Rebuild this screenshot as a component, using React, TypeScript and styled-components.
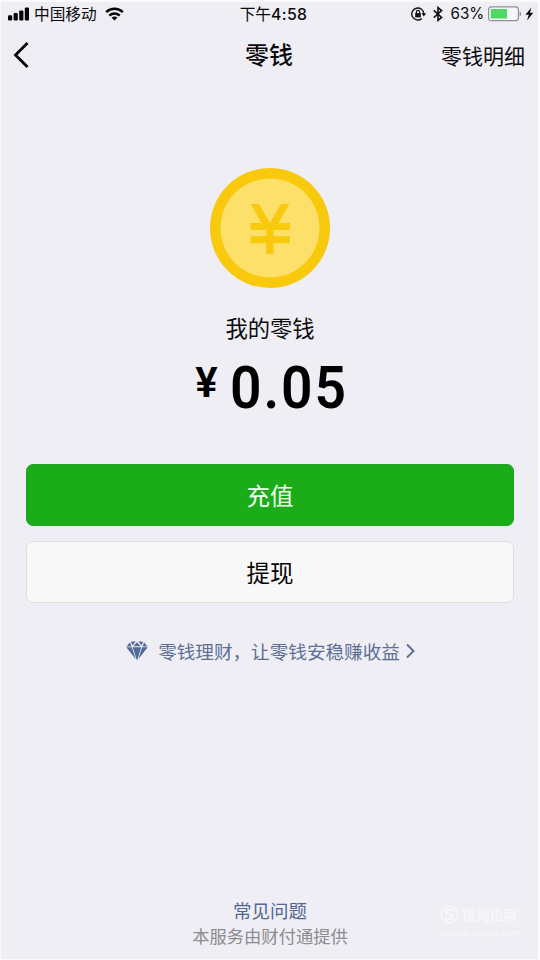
import React from "react";
import styled, { createGlobalStyle } from "styled-components";

const GlobalStyle = createGlobalStyle`
  * { box-sizing: border-box; }
  body { margin: 0; background: #fff; }
`;

const Screen = styled.div`
  position: relative;
  display: flex;
  flex-direction: column;
  width: 540px;
  height: 960px;
  overflow: hidden;
  background: #efeef4;
  border: solid #fafafc;
  border-width: 2px 2px 1px 1px;
  color: #0b0b0d;
  font-family: "Noto Sans CJK SC", sans-serif;
`;

const StatusBar = styled.header`
  display: grid;
  grid-template-columns: 1fr auto 1fr;
  align-items: center;
  height: 23px;
  padding: 0 4px 0 7px;
  font-size: 15.7px;
  line-height: 20px;
`;

const StatusGroup = styled.div<{ $end?: boolean }>`
  display: flex;
  align-items: center;
  justify-content: ${(p) => (p.$end ? "flex-end" : "flex-start")};
  svg { display: block; flex: none; }
`;

const Carrier = styled.span`
  margin: 0 8px 0 4px;
`;

const Clock = styled.span`
  padding: 1px 0 0 5px;
  white-space: nowrap;
`;

const ClockDigits = styled.span`
  font-family: Inter, sans-serif;
  font-size: 15.8px;
  font-weight: 500;
  letter-spacing: 0.35px;
`;

const Percent = styled.span`
  margin: 0 4px 0 8px;
  padding-top: 1px;
  font-family: Inter, sans-serif;
  font-size: 15.2px;
  letter-spacing: -0.1px;
`;

const RotationSlot = styled.span`
  margin-right: 6px;
`;

const BatterySlot = styled.span`
  margin-right: 3px;
`;

const NavBar = styled.nav`
  display: grid;
  grid-template-columns: 1fr auto 1fr;
  align-items: center;
  height: 60px;
  padding: 0 13px 0 12px;
  svg { display: block; }
`;

const Title = styled.h1`
  margin: 0 0 2px;
  font-size: 24px;
  font-weight: 500;
  line-height: 34px;
`;

const NavLink = styled.a`
  justify-self: end;
  font-size: 21px;
  line-height: 32px;
`;

const Main = styled.main`
  display: flex;
  flex-direction: column;
  align-items: center;
  padding: 83px 24px 0;
`;

const Label = styled.p`
  margin: 23px 0 0;
  padding-left: 1px;
  font-size: 22.3px;
  line-height: 32px;
`;

const Balance = styled.div`
  display: flex;
  align-items: flex-start;
  height: 64px;
  margin-top: 12px;
  padding-left: 7px;
  color: #000;
  font-family: Roboto, sans-serif;
  font-weight: 600;
`;

const Currency = styled.span`
  margin-right: 7px;
  font-size: 42px;
  line-height: 56px;
`;

const Amount = styled.span`
  margin-right: -2px;
  font-size: 60px;
  line-height: 65px;
  letter-spacing: 2px;
  transform: scaleX(0.92);
`;

const Actions = styled.div`
  display: flex;
  flex-direction: column;
  gap: 15px;
  width: 488px;
  margin-top: 45px;
`;

const ActionButton = styled.button<{ $primary?: boolean }>`
  height: 62px;
  padding: 0 0 0 1px;
  border: 1px solid ${(p) => (p.$primary ? "#22a326" : "#dedde2")};
  border-radius: 7px;
  background: ${(p) => (p.$primary ? "#1aad19" : "#f8f8f8")};
  color: ${(p) => (p.$primary ? "#f3fff3" : "#060606")};
  font-family: inherit;
  font-size: 23.5px;
  line-height: 56px;
`;

const Promo = styled.a`
  display: flex;
  align-items: center;
  height: 30px;
  margin-top: 33px;
  padding-left: 2px;
  color: #5c6e94;
  font-size: 18.6px;
  line-height: 28px;
  white-space: nowrap;
  svg { display: block; flex: none; }
`;

const PromoText = styled.span`
  margin: 0 6px 0 10px;
`;

const Footer = styled.footer`
  display: flex;
  flex-direction: column;
  align-items: center;
  margin-top: auto;
  padding: 0 0 11px 1px;
`;

const FaqLink = styled.a`
  color: #526692;
  font-size: 18.5px;
  line-height: 26px;
`;

const Provider = styled.p`
  margin: 0;
  color: #8b8b90;
  font-size: 17.3px;
  line-height: 25px;
`;

const Watermark = styled.div`
  position: absolute;
  right: 19px;
  bottom: 20px;
  width: 79px;
  color: #f8f8fb;
`;

const WatermarkBrand = styled.div`
  display: flex;
  align-items: center;
  gap: 3px;
  font-size: 13.7px;
  font-weight: 500;
  line-height: 20px;
`;

const WatermarkSite = styled.div`
  margin-top: 2px;
  font-family: "Liberation Sans", sans-serif;
  font-size: 9.8px;
  line-height: 13px;
`;

const Signal = () => (
  <svg width="22" height="14" viewBox="0 0 22 14" fill="#050505">
    <rect x="0" y="8.3" width="4.2" height="5.2" rx="1.2" />
    <rect x="5.6" y="6" width="4.2" height="7.5" rx="1.2" />
    <rect x="11.2" y="3.4" width="4.2" height="10.1" rx="1.2" />
    <rect x="16.8" y="0.6" width="4.2" height="12.9" rx="1.2" />
  </svg>
);

const Wifi = () => (
  <svg width="19" height="14" viewBox="0 0 19 14" fill="none" stroke="#050505" strokeWidth="2.5">
    <path d="M1.2 5.1a12 12 0 0 1 16.6 0" />
    <path d="M4.3 8.6a7.5 7.5 0 0 1 10.4 0" />
    <path d="M9.5 13.6 6.6 10.8a4.2 4.2 0 0 1 5.8 0z" fill="#050505" stroke="none" />
  </svg>
);

const RotationLock = () => (
  <svg width="16" height="14" viewBox="0 0 16 14" fill="none" stroke="#111" strokeWidth="1.4">
    <path d="M10.7 11.6A6 6 0 1 1 12.8 7" />
    <path d="M10.4 6.2h4.8L12.8 9.6z" fill="#111" stroke="none" />
    <rect x="4.2" y="6.1" width="5.6" height="4.3" fill="#111" stroke="none" />
    <path d="M5.4 6.5V5a1.6 1.6 0 0 1 3.2 0v1.5" strokeWidth="1.2" />
  </svg>
);

const Bluetooth = () => (
  <svg width="10" height="16" viewBox="0 0 10 16" fill="none" stroke="#111" strokeWidth="1.6">
    <path d="M.8 4.4 8.6 11.4 5 14.4V1.6L8.6 4.6.8 11.6" />
  </svg>
);

const Battery = () => (
  <svg width="34" height="16" viewBox="0 0 34 16">
    <rect x="0.6" y="0.9" width="29.8" height="13.8" rx="2.8" fill="#f6f5fa" stroke="#929197" strokeWidth="1.2" />
    <rect x="2.8" y="3" width="16.2" height="9.6" rx="0.6" fill="#4cd964" />
    <path d="M31.6 5.2c2 .8 2 4.4 0 5.2z" fill="#929197" />
  </svg>
);

const Bolt = () => (
  <svg width="9" height="14" viewBox="0 0 9 14" fill="#080808">
    <path d="M6.4.6.4 7.8h3.4L2 13.4l6.3-7.6H4.9z" />
  </svg>
);

const Back = () => (
  <svg width="18" height="28" viewBox="0 0 18 28" fill="none" stroke="#050505" strokeWidth="2.8">
    <path d="M14.5 2 2.5 14l12 12" />
  </svg>
);

const Coin = () => (
  <svg width="120" height="120" viewBox="0 0 120 120" display="block">
    <circle cx="60" cy="60" r="60" fill="#f8c90d" />
    <circle cx="60" cy="60" r="49.5" fill="#fce06a" />
    <path
      fill="#f8c90d"
      d="M40.7 36H49L60 54.7 71 36h8.3L68.5 55H80v7H63.6v6.3H80v7H63.6V86h-7.3V75.3H40.5v-7h15.8V62H40.5v-7h11z"
    />
  </svg>
);

const Diamond = () => (
  <svg width="22" height="20" viewBox="0 0 22 20" fill="#526b98">
    <path d="M5 .5h4.7L6.4 4.4zM12.3.5H17l-1.4 3.9zM11 1.2l3.6 4.1H7.4zM4 1.2l1.3 4.3H.5zM18 1.2l3.5 4.3h-4.8zM.3 6.3h5.5l4 12zM16.2 6.3h5.5l-9.5 12zM6.7 6.3h8.6L11 19.7z" />
  </svg>
);

const Chevron = () => (
  <svg width="9" height="16" viewBox="0 0 9 16" fill="none" stroke="#5c6e94" strokeWidth="1.9">
    <path d="m1 1.5 6.5 6.5L1 14.5" />
  </svg>
);

const BrandMark = () => (
  <svg width="19" height="19" viewBox="0 0 18 18" fill="none" stroke="#f8f8fb">
    <circle cx="9" cy="9" r="7.8" strokeWidth="1.6" />
    <path d="M13 5.7c-2-1.5-7.4-1.5-7.4.9 0 2.8 7 1.4 7 4.4 0 2.6-5.6 2.5-7.8.9" strokeWidth="2" />
  </svg>
);

export default function App() {
  return (
    <>
      <GlobalStyle />
      <Screen>
        <StatusBar>
          <StatusGroup>
            <Signal />
            <Carrier>中国移动</Carrier>
            <Wifi />
          </StatusGroup>
          <Clock>
            下午<ClockDigits>4:58</ClockDigits>
          </Clock>
          <StatusGroup $end>
            <RotationSlot>
              <RotationLock />
            </RotationSlot>
            <Bluetooth />
            <Percent>63%</Percent>
            <BatterySlot>
              <Battery />
            </BatterySlot>
            <Bolt />
          </StatusGroup>
        </StatusBar>
        <NavBar>
          <Back />
          <Title>零钱</Title>
          <NavLink>零钱明细</NavLink>
        </NavBar>
        <Main>
          <Coin />
          <Label>我的零钱</Label>
          <Balance>
            <Currency>¥</Currency>
            <Amount>0.05</Amount>
          </Balance>
          <Actions>
            <ActionButton $primary>充值</ActionButton>
            <ActionButton>提现</ActionButton>
          </Actions>
          <Promo>
            <Diamond />
            <PromoText>零钱理财，让零钱安稳赚收益</PromoText>
            <Chevron />
          </Promo>
        </Main>
        <Footer>
          <FaqLink>常见问题</FaqLink>
          <Provider>本服务由财付通提供</Provider>
        </Footer>
        <Watermark>
          <WatermarkBrand>
            <BrandMark />
            搜狗指南
          </WatermarkBrand>
          <WatermarkSite>zhinan.sogou.com</WatermarkSite>
        </Watermark>
      </Screen>
    </>
  );
}
